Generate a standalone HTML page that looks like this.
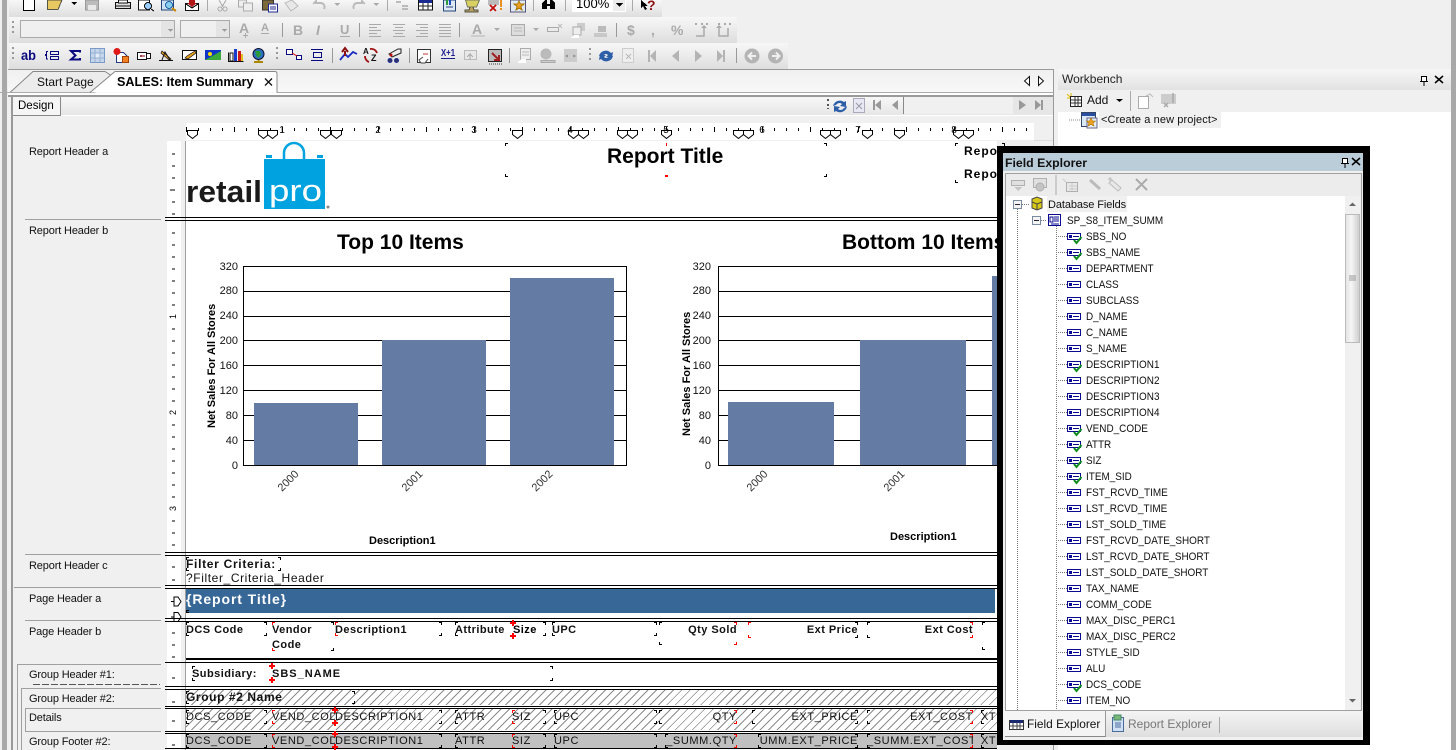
<!DOCTYPE html>
<html><head><meta charset="utf-8"><title>Report Designer</title>
<style>
html,body{margin:0;padding:0;width:1456px;height:750px;overflow:hidden;background:#f0f0f0}
body{position:relative;font:11px/14px "Liberation Sans",sans-serif;color:#000}
div,span,svg{position:absolute}
.t{white-space:nowrap}
.tb{background:linear-gradient(#f7f7f7,#dedede)}
.l{left:29px;white-space:nowrap;color:#111;letter-spacing:-.15px}
.hl{height:1px;background:#000;left:165px;width:832px}
.g{height:1px;background:#a0a0a0}
.b{--l:#000;--r:#000;white-space:nowrap;background:
linear-gradient(var(--l),var(--l)) 0 0/3px 1px no-repeat,linear-gradient(var(--l),var(--l)) 0 0/1px 3px no-repeat,
linear-gradient(var(--r),var(--r)) 100% 0/3px 1px no-repeat,linear-gradient(var(--r),var(--r)) 100% 0/1px 3px no-repeat,
linear-gradient(var(--l),var(--l)) 0 100%/3px 1px no-repeat,linear-gradient(var(--l),var(--l)) 0 100%/1px 3px no-repeat,
linear-gradient(var(--r),var(--r)) 100% 100%/3px 1px no-repeat,linear-gradient(var(--r),var(--r)) 100% 100%/1px 3px no-repeat;
letter-spacing:.6px;line-height:14px;color:#111}
.bo{font-weight:bold;letter-spacing:.45px;padding-top:1px;box-sizing:border-box}
.R{--l:#f00}.S{--r:#f00}
.ra{text-align:right}
.hatch{background:repeating-linear-gradient(-45deg,#fff 0 5px,#8c8c8c 5px 6px)}
.p{width:6px;height:6px;background:linear-gradient(#f00,#f00) 0 2px/6px 2px no-repeat,linear-gradient(#f00,#f00) 2px 0/2px 6px no-repeat}
svg text{font-family:"Liberation Sans",sans-serif}
</style></head>
<body>
<!-- outer chrome -->
<div style="left:0;top:0;width:1456px;height:70px;background:#f0f0f0"></div>
<div style="left:2px;top:0;width:5px;height:750px;background:#a8a8a8"></div>
<div style="left:1451px;top:0;width:5px;height:750px;background:#a8a8a8"></div>
<div class="tb" style="left:9px;top:0;width:653px;height:17px"></div>
<div class="tb" style="left:9px;top:17px;width:728px;height:26px"></div>
<div class="tb" style="left:9px;top:43px;width:779px;height:26px"></div>
<div style="left:8px;top:69px;width:1046px;height:1px;background:#999"></div>
<div style="left:20px;top:20px;width:155px;height:18px;border:1px solid #aaa;box-sizing:border-box;background:#f0f0f0"></div>
<div style="left:161px;top:21px;width:13px;height:16px;background:#e4e4e4"></div>
<div style="left:180px;top:20px;width:50px;height:18px;border:1px solid #aaa;box-sizing:border-box;background:#f0f0f0"></div>
<div style="left:216px;top:21px;width:13px;height:16px;background:#e4e4e4"></div>
<div style="left:572px;top:0;width:54px;height:12px;background:#fff"></div>
<div style="left:613px;top:0;width:12px;height:11px;background:#ececec"></div>
<div class="t" style="left:576px;top:-3px;font-size:13px;line-height:14px">100%</div>

<!-- toolbar icons -->
<svg style="left:0;top:0" width="1060" height="70" viewBox="0 0 1060 70">
<g stroke-width="1" shape-rendering="crispEdges">
<path d="M23.500 0V10.500H34.500V0" fill="#fff" stroke="#000"/>
<path d="M47.500 9.500V0H62L58 9.500Z" fill="#e8c860" stroke="#554"/>
<path d="M71 2h6l-3 3z" fill="#000"/>
<rect x="85.500" y="0" width="13" height="10" fill="#bbb" stroke="#999"/><rect x="88" y="5" width="8" height="5" fill="#e8e8e8"/>
<rect x="115.500" y="2.500" width="15" height="6" fill="#ddd" stroke="#111"/><rect x="118.500" y="0" width="9" height="3" fill="#fff" stroke="#111"/><path d="M116 6h14" stroke="#111"/>
<rect x="138.500" y="0" width="11" height="10" fill="#fff" stroke="#111"/><circle cx="148" cy="6" r="3.500" fill="#9cf" stroke="#111"/><path d="M151 9l3 2" stroke="#111"/>
<rect x="161.500" y="0" width="12" height="10" fill="#cfe2f5" stroke="#247"/><circle cx="169" cy="5" r="3.500" fill="#8ce" stroke="#26a"/><path d="M172 8l4 3" stroke="#c80" stroke-width="2"/>
<path d="M185.500 3.500h13v7h-13z" fill="#fff" stroke="#111"/><path d="M186 4l6 4 6-4" fill="none" stroke="#111"/><path d="M189 0h6v3h2l-5 4-5-4h2z" fill="#b01818"/>
<path d="M207.500 0v11" stroke="#aaa"/>
<path d="M219 0l4 7M226 0l-4 7" stroke="#aaa" fill="none"/><circle cx="220" cy="9" r="2" fill="none" stroke="#aaa"/><circle cx="225" cy="9" r="2" fill="none" stroke="#aaa"/>
<rect x="238.500" y="0" width="8" height="7" fill="#eee" stroke="#aaa"/><rect x="243.500" y="3" width="9" height="8" fill="#eee" stroke="#aaa"/>
<rect x="262.500" y="0" width="11" height="10" fill="#7d6a3a" stroke="#333"/><rect x="268.500" y="4" width="9" height="8" fill="#fff" stroke="#1a2a90"/><path d="M270 7h6M270 9h6" stroke="#1a2a90"/>
<path d="M285 3l7-3 6 6-7 5z" fill="#e8e8e8" stroke="#bbb"/>
<path d="M313 4l3-3v2h5a4 4 0 0 1 3 6" fill="none" stroke="#bbb" stroke-width="2"/><path d="M334 3h6l-3 3z" fill="#aaa"/>
<path d="M365 4l-3-3v2h-5a4 4 0 0 0-3 6" fill="none" stroke="#bbb" stroke-width="2"/><path d="M373 3h6l-3 3z" fill="#aaa"/>
<path d="M387.500 0v11" stroke="#aaa"/>
<path d="M396 1h5v2h-5zM402 5h6v2h-6zM402 8h6v2h-6z" fill="#bbb"/>
<rect x="418.500" y="0" width="14" height="10" fill="#fff" stroke="#111"/><rect x="419" y="0" width="13" height="3" fill="#1a2a90"/><path d="M419 6h13M423 3v7M428 3v7" stroke="#222"/>
<rect x="443.500" y="0" width="12" height="11" fill="#dfe9f5" stroke="#247"/><rect x="446" y="0" width="2" height="5" fill="#2a9a3a"/><rect x="449" y="0" width="2" height="5" fill="#1a50c0"/><path d="M446 7h7" stroke="#247"/>
<path d="M465.500 0h14l-3 7h-9z" fill="#d8d060" stroke="#776"/><path d="M470 7l-1 3h-4v2h13v-2h-4l-1-3" fill="#bca060" stroke="#554"/>
<rect x="488" y="0" width="11" height="5" fill="#bbb"/><path d="M490 5l6 6M496 5l-6 6" stroke="#c01010" stroke-width="2"/><rect x="500" y="0" width="2" height="7" fill="#e89020"/><rect x="500" y="8" width="2" height="2" fill="#e89020"/>
<rect x="510.500" y="0" width="15" height="12" fill="#dfe9f5" stroke="#557"/><path d="M519 1l1.500 3h3.500l-3 2.500 1 3.500-3-2-3 2 1-3.500-3-2.500h3.500z" fill="#f0a020" stroke="#a70"/>
<path d="M533.500 0v11M565.500 0v11M632.500 0v11" stroke="#aaa"/>
<path d="M542 9V3l3-3h2v4h3V0h2l3 3v6h-5V6h-3v3z" fill="#000"/>
<path d="M616 3h7l-3.500 4z" fill="#000"/>
<path d="M641 0v8l2-2 2 4 2-1-2-3h3z" fill="#000"/>
<path d="M13 21v2M13 26v2M13 31v2" stroke="#999" stroke-width="2"/>
<path d="M168 29h5l-2.500 3z" fill="#999"/><path d="M222 29h5l-2.500 3z" fill="#999"/>
</g>
<text x="647" y="10" font-size="14" font-weight="bold" fill="#8b1010">?</text>
<g fill="#aaa" font-weight="bold">
<text x="239" y="33" font-size="14">A</text><path d="M243 35h2v-2h1v2h2v1h-2v2h-1v-2h-2z"/>
<text x="261" y="31" font-size="11">A</text><path d="M261 33h8v1h-8z"/>
<text x="293" y="35" font-size="14">B</text>
<text x="316" y="35" font-size="14" font-style="italic" font-family="Liberation Serif,serif">I</text>
<text x="340" y="34" font-size="13">U</text><path d="M340 36h10v1h-10z"/>
<path d="M369 24h12v1h-12zM369 27h8v1h-8zM369 30h12v1h-12zM369 33h8v1h-8zM369 36h12v1h-12z"/>
<path d="M393 24h12v1h-12zM395 27h8v1h-8zM393 30h12v1h-12zM395 33h8v1h-8zM393 36h12v1h-12z"/>
<path d="M416 24h12v1h-12zM420 27h8v1h-8zM416 30h12v1h-12zM420 33h8v1h-8zM416 36h12v1h-12z"/>
<path d="M439 24h12v1h-12zM439 27h12v1h-12zM439 30h12v1h-12zM439 33h12v1h-12zM439 36h12v1h-12z"/>
<text x="472" y="34" font-size="14">A</text><path d="M471 35h14v2h-14z" fill="#ccc"/>
<path d="M494 28h6l-3 3zM533 28h6l-3 3z"/>
<rect x="511.500" y="24.500" width="13" height="11" fill="#ddd" stroke="#aaa"/><path d="M514 28h8M514 31h8" stroke="#bbb"/>
<path d="M547.500 27.500h11v4h-11z" fill="none" stroke="#aaa"/><path d="M558 24l4 4M562 24l-4 4" stroke="#bbb"/>
<rect x="577" y="23" width="8" height="8" fill="#ccc"/><rect x="573" y="27" width="8" height="8" fill="#eee" stroke="#aaa"/><path d="M571 38l3-3h5v3z" fill="#fff"/>
<rect x="598" y="26" width="8" height="6" fill="#bbb"/><path d="M594 34h13M594 36h13" stroke="#aaa"/>
<text x="627" y="35" font-size="14">$</text><text x="651" y="35" font-size="14">,</text><text x="671" y="35" font-size="14">%</text>
<path d="M696 36h8v-8" fill="none" stroke="#aaa" stroke-width="1.500"/><path d="M701 28h6l-3-3z"/><path d="M695 23h2v2h-2zM701 23h2v2h-2zM706 23h2v2h-2z"/>
<path d="M719 28v8h9v-8" fill="none" stroke="#aaa" stroke-width="1.500"/><path d="M716 28h6l-3-3z"/><path d="M718 23h2v2h-2zM724 23h2v2h-2zM729 23h2v2h-2z"/>
</g>
<path d="M282.500 23v14M359.500 23v14M459.500 23v14M616.500 23v14" stroke="#999" shape-rendering="crispEdges"/>
<path d="M13 47v2M13 52v2M13 57v2M277 47v2M277 52v2M277 57v2M590 48v2M590 53v2M590 58v2" stroke="#999" stroke-width="2" shape-rendering="crispEdges"/>
<path d="M332.500 48v15M409.500 48v15M509.500 48v15M736.500 48v15" stroke="#999" shape-rendering="crispEdges"/>
<text x="21" y="60" font-size="14" font-weight="bold" fill="#0a0a80" textLength="15" lengthAdjust="spacingAndGlyphs">ab</text>
<g fill="none" stroke="#0a0a80" shape-rendering="crispEdges">
<rect x="50.500" y="51.500" width="8" height="3"/><rect x="50.500" y="56.500" width="8" height="3"/><path d="M48 51.500h-1.500v3h-1v1h1v3.500h1.500"/>
</g>
<path d="M80 52.500v-1.500H71l4.500 4.500L71 59.500h9V58" fill="none" stroke="#0a0a80" stroke-width="2"/>
<g shape-rendering="crispEdges" fill="none">
<rect x="90.500" y="48.500" width="14" height="14" fill="#c6d6ea" stroke="#7a9ac8"/><rect x="95" y="53" width="6" height="5" fill="#e4ecf6"/><path d="M95 49v13M100 49v13M91 53h13M91 58h13" stroke="#94b0d4"/>
<path d="M116.500 52.500h7l4 4v6h-11z" fill="#fff" stroke="#223a80"/>
<rect x="122.500" y="56.500" width="6" height="6" fill="#f08020" stroke="#a04000"/>
<rect x="137.500" y="52.500" width="9" height="7" fill="#fff" stroke="#111"/><rect x="146.500" y="53.500" width="4" height="5" fill="#fff" stroke="#111"/><path d="M140 56h5M141 55v2" stroke="#800"/>
<path d="M159 60.500h14" stroke="#111"/>
<rect x="182.500" y="50.500" width="14" height="9" fill="#fff" stroke="#111"/>
<rect x="205" y="50" width="16" height="10" fill="#1033c8"/>
<path d="M228.500 52.500v9h15" stroke="#111"/><rect x="230" y="53" width="3" height="8" fill="#fff" stroke="#111"/><rect x="234" y="49" width="3" height="12" fill="#1a3ad0"/><rect x="238" y="51" width="3" height="10" fill="#d01a1a"/><rect x="241" y="54" width="2" height="7" fill="#e0c020"/>
<rect x="286.500" y="49.500" width="6" height="5" fill="#fff" stroke="#0a0a80"/><rect x="296.500" y="55.500" width="5" height="4" fill="#fff" stroke="#0a0a80"/>
<path d="M311 49.500h12M313.500 52.500h8v5h-8zM311 60.500h12" stroke="#0a0a80"/>
<rect x="417.500" y="49.500" width="13" height="13" fill="#fff" stroke="#333"/><path d="M423 54h5" stroke="#c33"/>
<rect x="464.500" y="50.500" width="12" height="9" fill="#e8e8e8" stroke="#bbb"/><path d="M470 60v-6l-3 3M470 54l3 3" stroke="#aaa"/>
<rect x="488.500" y="49.500" width="13" height="12" fill="#bbb" stroke="#222"/>
<rect x="520.500" y="48.500" width="10" height="11" fill="#eee" stroke="#aaa"/><path d="M522 52h7M522 55h7" stroke="#bbb"/><path d="M517 63l4-4h5v4z" fill="#fff"/>
<circle cx="546" cy="54" r="5.500" fill="#bbb"/><path d="M541 60.500h14v2h-14z" fill="#ccc" stroke="#aaa"/>
<rect x="564" y="49" width="13" height="13" fill="#ccc"/><path d="M568 55l-2 1 2 1M573 55l2 1-2 1" stroke="#888"/>
<rect x="622.500" y="48.500" width="11" height="14" fill="#eee" stroke="#ccc"/><path d="M626 54l5 5M631 54l-5 5" stroke="#bbb"/>
</g>
<circle cx="117" cy="51.500" r="3.500" fill="#e01818"/>
<path d="M162 51l9 8-2 1-8-7z" fill="#e8a020" stroke="#111" stroke-width=".7"/>
<path d="M162 60l3-8 5 8" fill="none" stroke="#111"/>
<path d="M185 58l2-2 8-5 1 2-8 6z" fill="#e8a020" stroke="#111" stroke-width=".7"/>
<path d="M205 60l16-9v9z" fill="#3aa83a"/><circle cx="210" cy="54" r="2" fill="#f8e000"/>
<circle cx="258.500" cy="54" r="5.500" fill="#2a70c0" stroke="#113"/><path d="M255 51h5l1 4-3 3-2-3z" fill="#2a9a3a"/><path d="M254 62h9M258.500 60v2" stroke="#a80" stroke-width="2"/>
<path d="M292 53l5 3" stroke="#d00"/>
<path d="M340 60l5-6 3 3 5-5 4 2" fill="none" stroke="#1a2ac0" stroke-width="1.800"/><path d="M345 56v-5M342 52l3-4 3 4" fill="none" stroke="#8b1010" stroke-width="2"/>
<text x="363" y="54" font-size="8" font-weight="bold" fill="#111">A</text><text x="371" y="61" font-size="9" font-weight="bold" fill="#111">Z</text>
<path d="M370 49a6 6 0 0 1 7 4M365 56a6 6 0 0 0 4 6" fill="none" stroke="#a01010" stroke-width="1.800"/>
<circle cx="390" cy="60.500" r="2" stroke="#1a2a90" fill="#336"/><circle cx="396.500" cy="60.500" r="2" stroke="#1a2a90" fill="#336"/><path d="M389 54l9-5h3v4l-9 4z" stroke="#222" fill="#eee"/><circle cx="391" cy="55" r="1.500" fill="#c01010"/>
<path d="M423 57l-4 3 2 3h4l3-4" fill="#fff" stroke="#444"/>
<text x="441" y="56" font-size="10" font-weight="bold" fill="#1a1a90" textLength="14" lengthAdjust="spacingAndGlyphs">X+1</text>
<path d="M441 58h14v1h-14z" fill="#1a1a90"/>
<path d="M492 53l7 7M499 55v5h-5" fill="none" stroke="#a02020" stroke-width="2"/>
<path d="M489 64h13" stroke="#333" stroke-dasharray="1 1"/>
<path d="M599 56a7 7 0 0 1 12-3l2-1-1 6-6-1 2-2a4 4 0 0 0-6 1zM613 56a7 7 0 0 1-12 3l-2 1 1-6 6 1-2 2a4 4 0 0 0 6-1z" fill="#2c5fa8"/>
<g fill="#b4b4b4">
<path d="M648 50h2v12h-2zM656 50v12l-6-6zM679 50v12l-7-6zM695 50l7 6-7 6zM717 50l6 6-6 6zM723 50h2v12h-2z"/>
<circle cx="752" cy="56" r="7.500"/><circle cx="775.500" cy="56" r="7.500"/>
</g>
<path d="M756 56h-7m3-3.500l-3.500 3.500 3.500 3.500M772 56h7m-3-3.500l3.500 3.500-3.500 3.500" stroke="#f0f0f0" stroke-width="2" fill="none"/>
</svg>

<!-- tabs -->
<div style="left:8px;top:70px;width:1045px;height:22px;background:linear-gradient(#f0f0f0,#f8f8f8)"></div>
<div style="left:8px;top:93px;width:1045px;height:2px;background:#fff"></div>
<div style="left:277px;top:92px;width:776px;height:1px;background:#aaa"></div>
<svg style="left:0;top:68px" width="300" height="30" viewBox="0 0 300 30">
<path d="M10 24.500L33 3.500H105L112 8 95 24.500Z" fill="#ececec" stroke="#888"/>
<path d="M90 24.500L115 3.500H275Q277 3.500 277 6V24.500" fill="#fff" stroke="#888"/>
<path d="M0 24.500H10M10 24.500H90" stroke="#aaa"/>
<path d="M265 10.500l7 7M272 10.500l-7 7" stroke="#111" stroke-width="1.300"/>
</svg>
<div class="t" style="left:37px;top:75px;font-size:12px;color:#111">Start Page</div>
<div class="t" style="left:117px;top:75px;font-size:12.600px;font-weight:bold">SALES: Item Summary</div>
<svg style="left:1020px;top:74px" width="30" height="14"><path d="M9.500 2.500v9l-5-4.500zM18.500 2.500v9l5-4.500z" fill="#fff" stroke="#111"/></svg>
<div style="left:8px;top:95px;width:1045px;height:2px;background:#999"></div>
<div style="left:1053px;top:69px;width:1px;height:681px;background:#999"></div>
<div style="left:11px;top:96px;width:2px;height:654px;background:#999"></div>
<div style="left:13px;top:97px;width:1040px;height:18px;background:linear-gradient(#f7f7f7,#e6e6e6)"></div>
<div style="left:13px;top:115px;width:1040px;height:1px;background:#fff"></div>
<div class="t" style="left:13px;top:97px;width:47px;height:18px;background:#f5f5f5;border-right:1px solid #888;border-bottom:1px solid #888;font-size:11.500px;line-height:18px;text-indent:5px">Design</div>
<div style="left:903px;top:97px;width:110px;height:17px;background:#f0f0f0;border-left:1px solid #888"></div>
<div style="left:1013px;top:97px;width:40px;height:17px;background:#e6e6e6"></div>
<svg style="left:825px;top:96px" width="230" height="20" viewBox="825 96 230 20">
<path d="M828 99v2M828 104v2M828 108v1" stroke="#555" stroke-width="2"/>
<path d="M833 106a7 7 0 0 1 11-4l2-1v6l-6-1 2-2a4 4 0 0 0-6 1zM847 106a7 7 0 0 1-11 5l-2 1v-6l6 1-2 2a4 4 0 0 0 6-1z" fill="#2c5fa8"/>
<rect x="853.500" y="98.500" width="11" height="14" fill="#e8e8f4" stroke="#aab"/><path d="M856 103l6 6M862 103l-6 6" stroke="#99a"/>
<g fill="#999"><path d="M873 100h2v10h-2zM881 100v10l-6-5zM898 100v10l-6-5zM1019 100l7 5-7 5zM1035 100l6 5-6 5zM1041 100h2v10h-2z"/></g>
</svg>

<!-- design area -->
<div style="left:13px;top:116px;width:1040px;height:634px;background:#f0f0f0"></div>
<div style="left:186px;top:123px;width:848px;height:17px;background:#fff"></div>
<div style="left:1034px;top:140px;width:19px;height:1px;background:#ddd"></div>
<div style="left:167px;top:141px;width:14px;height:609px;background:#fff"></div>
<div style="left:186px;top:141px;width:811px;height:609px;background:#fff"></div>
<div style="left:185px;top:141px;width:1px;height:609px;background:#a0a0a0"></div>

<svg style="left:186px;top:123px" width="848" height="17" viewBox="186 123 848 17" shape-rendering="crispEdges">
<defs><pattern id="tk" x="186" y="123" width="12" height="17" patternUnits="userSpaceOnUse"><rect x="0" y="5" width="1" height="3" fill="#000"/></pattern>
<pattern id="tk2" x="186" y="123" width="48" height="17" patternUnits="userSpaceOnUse"><rect x="0" y="4" width="1" height="5" fill="#000"/></pattern>
<symbol id="mk" overflow="visible"><path d="M-5 0h10v4l-5 4-5-4z" fill="#fff" stroke="#000" transform="translate(.5 .5)"/></symbol></defs>
<rect x="186" y="123" width="848" height="17" fill="url(#tk)"/><rect x="186" y="123" width="848" height="17" fill="url(#tk2)"/>
<rect x="186" y="123" width="848" height="3" fill="#fff"/>
<g shape-rendering="auto">
<use href="#mk" x="192" y="130"/><use href="#mk" x="263" y="130"/><use href="#mk" x="272" y="130"/><use href="#mk" x="325" y="130"/><use href="#mk" x="336" y="130"/><use href="#mk" x="517" y="130"/><use href="#mk" x="573" y="130"/><use href="#mk" x="583" y="130"/><use href="#mk" x="622" y="130"/><use href="#mk" x="632" y="130"/><use href="#mk" x="666" y="130"/><use href="#mk" x="738" y="130"/><use href="#mk" x="748" y="130"/><use href="#mk" x="825" y="130"/><use href="#mk" x="835" y="130"/><use href="#mk" x="867" y="130"/><use href="#mk" x="899" y="130"/><use href="#mk" x="958" y="130"/><use href="#mk" x="968" y="130"/>
<g font-size="10" text-anchor="middle" fill="#000"><text x="282" y="133">1</text><text x="378" y="133">2</text><text x="474" y="133">3</text><text x="570" y="133">4</text><text x="666" y="133">5</text><text x="762" y="133">6</text><text x="858" y="133">7</text><text x="954" y="133">8</text></g>
</g>
</svg>

<!-- vertical ruler -->
<svg style="left:167px;top:141px" width="19" height="609" viewBox="167 141 19 609" shape-rendering="crispEdges">
<path d="M172 154h3M172 166h3M172 178h3M170 190h5M172 202h3M172 214h3M172 233h3M172 245h3M172 257h3M172 269h3M172 281h3M172 293h3M172 305h3M172 329h3M172 341h3M172 353h3M172 365h3M172 377h3M172 389h3M172 401h3M172 425h3M172 437h3M172 449h3M172 461h3M172 473h3M172 485h3M172 497h3M172 521h3M172 533h3M172 545h3M172 567h3M172 580h3M172 633h3M172 645h3M172 657h3M172 678h3M172 702h3M172 721h3M172 745h3" stroke="#000"/>
<g shape-rendering="auto" font-size="9" fill="#000"><text transform="translate(176 319) rotate(-90)">1</text><text transform="translate(176 415) rotate(-90)">2</text><text transform="translate(176 511) rotate(-90)">3</text></g>
<path d="M181 601.500l-3-4.500h-4v9h4zM174 601.500h-3M181 617l-3-4.500h-4v9h4zM174 617h-3" fill="#fff" stroke="#000" shape-rendering="auto"/>
</svg>

<!-- section labels -->
<div class="l" style="top:145px">Report Header a</div>
<div class="l" style="top:224px">Report Header b</div>
<div class="l" style="top:559px">Report Header c</div>
<div class="l" style="top:592px">Page Header a</div>
<div class="l" style="top:625px">Page Header b</div>
<div class="l" style="top:668px">Group Header #1:</div>
<div class="l" style="top:692px">Group Header #2:</div>
<div class="l" style="top:711px">Details</div>
<div class="l" style="top:735px">Group Footer #2:</div>
<div style="left:33px;top:684px;width:127px;height:1px;background:repeating-linear-gradient(90deg,#555 0 7px,#f0f0f0 7px 9px)"></div>
<div class="g" style="left:25px;top:219px;width:136px"></div>
<div class="g" style="left:25px;top:554px;width:136px"></div>
<div class="g" style="left:14px;top:587px;width:147px"></div>
<div class="g" style="left:25px;top:620px;width:136px"></div>
<div class="g" style="left:17px;top:664px;width:144px"></div>
<div class="g" style="left:21px;top:688px;width:140px"></div>
<div class="g" style="left:25px;top:708px;width:136px"></div>
<div class="g" style="left:25px;top:731px;width:136px"></div>
<div style="left:17px;top:664px;width:1px;height:86px;background:#a0a0a0"></div>
<div style="left:21px;top:688px;width:1px;height:62px;background:#a0a0a0"></div>
<div style="left:25px;top:708px;width:1px;height:23px;background:#a0a0a0"></div>

<!-- bands -->
<div style="left:186px;top:589px;width:809px;height:24px;background:#366797"></div>
<div class="hatch" style="left:186px;top:690px;width:811px;height:15px"></div>
<div class="hatch" style="left:186px;top:709px;width:811px;height:21px"></div>
<div style="left:186px;top:733px;width:811px;height:15px;background:#c0c0c0"></div>

<!-- section rules -->
<div class="hl" style="top:217px"></div><div class="hl" style="top:220px"></div>
<div class="hl" style="top:552px"></div><div class="hl" style="top:555px"></div>
<div class="hl" style="top:585px"></div><div class="hl" style="top:588px"></div>
<div class="hl" style="top:618px"></div><div class="hl" style="top:621px"></div>
<div class="hl" style="top:658px;left:186px;width:811px;height:2px"></div><div class="hl" style="top:662px"></div>
<div class="hl" style="top:686px"></div><div class="hl" style="top:689px"></div>
<div class="hl" style="top:706px"></div><div class="hl" style="top:708px"></div>
<div class="hl" style="top:731px"></div><div class="hl" style="top:733px"></div>
<div class="hl" style="top:748px"></div>

<!-- logo -->
<svg style="left:186px;top:141px" width="150" height="76" viewBox="186 141 150 76">
<path d="M284 160v-7a10 10 0 0 1 20 0v7" fill="none" stroke="#00a3e0" stroke-width="2.500"/>
<rect x="264" y="159" width="61" height="50" fill="#00a3e0"/>
<rect x="266" y="155" width="6" height="3" fill="#00a3e0"/><rect x="317" y="155" width="6" height="3" fill="#00a3e0"/>
<text x="186" y="202" font-size="31" font-weight="bold" fill="#1a1a1a" textLength="76" lengthAdjust="spacingAndGlyphs">retail</text>
<text x="269" y="201" font-size="31" fill="#fff" textLength="53" lengthAdjust="spacingAndGlyphs">pro</text>
<circle cx="328" cy="207" r="1.500" fill="#888"/>
</svg>

<!-- report header text -->
<div class="b" style="left:505px;top:143px;width:322px;height:34px;letter-spacing:0"></div>
<div class="t" style="left:607px;top:145px;font-size:21px;font-weight:bold;line-height:24px">Report Title</div>
<div class="b" style="left:955px;top:143px;width:50px;height:40px;letter-spacing:0"></div>
<div class="t bo" style="left:964px;top:143px;letter-spacing:1px;font-size:12px">Repo</div>
<div class="t bo" style="left:964px;top:166px;letter-spacing:1px;font-size:12px">Repo</div>
<div style="left:666px;top:143px;width:1px;height:3px;background:#f00"></div>
<div style="left:665px;top:175px;width:3px;height:2px;background:#f00"></div>

<!-- charts -->
<svg style="left:186px;top:222px" width="811" height="330" viewBox="186 222 811 330">
<g stroke="#000" stroke-width="1" shape-rendering="crispEdges">
<rect x="243.500" y="266.500" width="383" height="199" fill="#fff"/>
<path d="M243 291.500h383M243 316.500h383M243 340.500h383M243 365.500h383M243 390.500h383M243 415.500h383M243 440.500h383"/>
<rect x="718.500" y="266.500" width="300" height="199" fill="#fff"/>
<path d="M718 291.500h279M718 316.500h279M718 340.500h279M718 365.500h279M718 390.500h279M718 415.500h279M718 440.500h279"/>
</g>
<g fill="#647ba3" shape-rendering="crispEdges">
<rect x="254" y="403" width="104" height="62"/><rect x="382" y="340" width="104" height="125"/><rect x="510" y="278" width="104" height="187"/>
<rect x="728" y="402" width="106" height="63"/><rect x="860" y="340" width="106" height="125"/><rect x="992" y="276" width="5" height="189"/>
</g>
<text x="337" y="249" font-size="21" font-weight="bold">Top 10 Items</text>
<text x="842" y="249" font-size="21" font-weight="bold">Bottom 10 Items</text>
<g font-size="11" text-anchor="end" fill="#111">
<text x="238" y="270">320</text><text x="238" y="294">280</text><text x="238" y="319">240</text><text x="238" y="344">200</text><text x="238" y="369">160</text><text x="238" y="394">120</text><text x="238" y="419">80</text><text x="238" y="444">40</text><text x="238" y="469">0</text>
<text x="711" y="270">320</text><text x="711" y="294">280</text><text x="711" y="319">240</text><text x="711" y="344">200</text><text x="711" y="369">160</text><text x="711" y="394">120</text><text x="711" y="419">80</text><text x="711" y="444">40</text><text x="711" y="469">0</text>
</g>
<g font-size="11" fill="#333">
<text transform="translate(282 492) rotate(-45)">2000</text><text transform="translate(406 492) rotate(-45)">2001</text><text transform="translate(536 492) rotate(-45)">2002</text>
<text transform="translate(751 492) rotate(-45)">2000</text><text transform="translate(888 492) rotate(-45)">2001</text>
</g>
<g font-size="11" font-weight="bold">
<text transform="translate(215 428) rotate(-90)">Net Sales For All Stores</text>
<text transform="translate(690 436) rotate(-90)">Net Sales For All Stores</text>
<text x="369" y="544">Description1</text><text x="890" y="540">Description1</text>
</g>
</svg>

<!-- filter -->
<div class="b" style="left:186px;top:557px;width:95px;height:14px;font-weight:bold;letter-spacing:.7px;font-size:12px">Filter Criteria:</div>
<div class="t" style="left:186px;top:571px;font-size:12px;letter-spacing:.6px;color:#111">?Filter_Criteria_Header</div>
<div class="t" style="left:186px;top:591px;font-size:14px;font-weight:bold;line-height:17px;letter-spacing:.9px;color:#fff">{Report Title}</div>
<div class="b" style="left:186px;top:610px;width:809px;height:3px;--r:#366797"></div>

<!-- page header b -->
<div class="b bo" style="left:186px;top:622px;width:81px;height:14px">DCS Code</div>
<div class="b bo R" style="left:272px;top:622px;width:62px;height:29px;line-height:15px">Vendor<br>Code</div>
<div class="b bo R" style="left:335px;top:622px;width:107px;height:14px">Description1</div>
<div class="b bo" style="left:455px;top:622px;width:91px;height:14px">Attribute</div>
<div class="t bo" style="left:513px;top:622px">Size</div>
<div class="p" style="left:510px;top:620px"></div><div class="p" style="left:510px;top:633px"></div>
<div class="b bo" style="left:552px;top:622px;width:105px;height:14px">UPC</div>
<div class="b bo ra S" style="left:659px;top:622px;width:78px;height:23px">Qty Sold</div>
<div class="b bo ra R" style="left:748px;top:622px;width:110px;height:16px">Ext Price</div>
<div class="b bo ra S" style="left:867px;top:622px;width:106px;height:16px">Ext Cost</div>
<div class="b" style="left:982px;top:622px;width:15px;height:28px;--r:transparent"></div>

<!-- group headers -->
<div class="b bo" style="left:192px;top:666px;width:79px;height:15px;--r:transparent">Subsidiary:</div>
<div class="b bo R" style="left:272px;top:666px;width:281px;height:15px;--r:#000;letter-spacing:1px">SBS_NAME</div>
<div class="p" style="left:269px;top:663px"></div><div class="p" style="left:269px;top:677px"></div>
<div class="b bo" style="left:186px;top:691px;width:169px;height:13px;font-size:12px;line-height:12px;padding-top:0;letter-spacing:.6px">Group #2 Name</div>

<!-- details -->
<div class="b" style="left:186px;top:710px;width:81px;height:14px">DCS_CODE</div>
<div class="b R" style="left:272px;top:710px;width:63px;height:14px;overflow:hidden">VEND_COD</div>
<div class="b" style="left:335px;top:710px;width:107px;height:14px">DESCRIPTION1</div>
<div class="b" style="left:455px;top:710px;width:91px;height:14px">ATTR</div>
<div class="b R" style="left:512px;top:710px;width:34px;height:14px">SIZ</div>
<div class="b" style="left:554px;top:710px;width:103px;height:14px">UPC</div>
<div class="b ra S" style="left:659px;top:710px;width:78px;height:14px">QTY</div>
<div class="b ra" style="left:752px;top:710px;width:106px;height:14px">EXT_PRICE</div>
<div class="b ra S" style="left:867px;top:710px;width:106px;height:14px">EXT_COST</div>
<div class="b" style="left:981px;top:710px;width:16px;height:14px;--r:transparent">XT</div>

<!-- footer -->
<div class="b" style="left:186px;top:734px;width:81px;height:14px">DCS_CODE</div>
<div class="b R" style="left:272px;top:734px;width:63px;height:14px;overflow:hidden">VEND_COD</div>
<div class="b" style="left:335px;top:734px;width:107px;height:14px">DESCRIPTION1</div>
<div class="b" style="left:455px;top:734px;width:91px;height:14px">ATTR</div>
<div class="b R" style="left:512px;top:734px;width:34px;height:14px">SIZ</div>
<div class="b" style="left:554px;top:734px;width:103px;height:14px">UPC</div>
<div class="b ra S" style="left:665px;top:734px;width:72px;height:14px">_SUMM.QTY</div>
<div class="b ra" style="left:758px;top:734px;width:100px;height:14px;overflow:hidden">UMM.EXT_PRICE</div>
<div class="b ra S" style="left:867px;top:734px;width:106px;height:14px;overflow:hidden">_SUMM.EXT_COST</div>
<div class="b" style="left:981px;top:734px;width:16px;height:14px;--r:transparent">XT</div>
<div class="p" style="left:332px;top:707px"></div><div class="p" style="left:332px;top:720px"></div>
<div class="p" style="left:332px;top:731px"></div><div class="p" style="left:332px;top:744px"></div>

<!-- workbench -->
<div style="left:1054px;top:69px;width:397px;height:681px;background:#fff"></div>
<div style="left:1054px;top:69px;width:4px;height:681px;background:#f0f0f0"></div>
<div style="left:1058px;top:69px;width:393px;height:21px;background:linear-gradient(#f7f7f7,#e2e2e2)"></div>
<div style="left:1058px;top:90px;width:393px;height:22px;background:#f0f0f0"></div>
<div class="t" style="left:1062px;top:72px;font-size:12px;color:#222">Workbench</div>
<svg style="left:1060px;top:70px" width="390" height="60" viewBox="1060 70 390 60">
<path d="M1421.500 76.500h5v5h-5zM1420 81.500h8M1424 82v4" fill="#fff" stroke="#000" shape-rendering="crispEdges"/>
<path d="M1435 76l8 7M1443 76l-8 7" stroke="#000" stroke-width="1.500"/>
<rect x="1070.500" y="96.500" width="11" height="10" fill="#fff" stroke="#222" shape-rendering="crispEdges"/><path d="M1071 100h10M1071 103h10M1075 97v9M1078 97v9" stroke="#333" shape-rendering="crispEdges"/><path d="M1067 94l3 3M1071 93v3M1067 98h3" stroke="#db0"/>
<path d="M1116 99h7l-3.500 3z" fill="#000"/>
<path d="M1130.500 91v20" stroke="#aaa" shape-rendering="crispEdges"/>
<path d="M1139.500 96.500h9v12h-10v-12z" fill="#fff" stroke="#aaa"/><path d="M1146 96l4-2 3 3" fill="none" stroke="#bbb"/>
<rect x="1161" y="94" width="15" height="10" fill="#ccc"/><path d="M1164 103l4 4M1168 103l-4 4M1173 93v10" stroke="#aaa" stroke-width="1.500"/>
<path d="M1069 120h12" stroke="#888" stroke-dasharray="1 1" shape-rendering="crispEdges"/>
<rect x="1081.500" y="112.500" width="14" height="14" fill="#dbe8f5" stroke="#346"/><rect x="1082" y="113" width="13" height="3" fill="#2a4ea0"/><rect x="1087" y="118" width="10" height="10" fill="#e8eef8" stroke="#668"/>
<path d="M1091 118l1.500 3h3l-2.500 2 1 3-3-1.500-3 1.500 1-3-2.500-2h3z" fill="#f0a020" stroke="#a70" stroke-width=".6"/>
</svg>
<div class="t" style="left:1087px;top:93px;font-size:12px;color:#111">Add</div>
<div class="t" style="left:1099px;top:112px;width:122px;height:16px;background:#f0f0f0;line-height:17px;text-indent:2px;color:#111;letter-spacing:.1px">&lt;Create a new project&gt;</div>

<!-- Field Explorer -->
<div style="left:997px;top:146px;width:373px;height:599px;background:#000"></div>
<div style="left:1003px;top:153px;width:360px;height:587px;background:#f0f0f0"></div>
<div style="left:1003px;top:153px;width:360px;height:18px;background:#bccdda"></div>
<div class="t" style="left:1005px;top:156px;font-size:12.300px;font-weight:bold;color:#111">Field Explorer</div>
<div style="left:1005px;top:173px;width:357px;height:1px;background:#a0a0a0"></div>
<div style="left:1005px;top:174px;width:357px;height:22px;background:#ececec"></div>
<div style="left:1005px;top:196px;width:355px;height:514px;background:#fff"></div>
<div style="left:1005px;top:173px;width:1px;height:538px;background:#a0a0a0"></div>
<div style="left:1361px;top:173px;width:1px;height:538px;background:#a0a0a0"></div>
<div style="left:1345px;top:196px;width:15px;height:514px;background:#f0f0f0"></div>
<div style="left:1345px;top:214px;width:15px;height:129px;background:linear-gradient(90deg,#e4e4e4,#f6f6f6 40%,#cfcfcf);box-sizing:border-box;border:1px solid #bbb"></div>

<svg style="left:997px;top:146px" width="373" height="599" viewBox="997 146 373 599">
<defs>
<symbol id="fd" overflow="visible"><path d="M1056 0h11" stroke="#777" stroke-dasharray="1 1" transform="translate(0 .5)" shape-rendering="crispEdges"/><rect x="1067.500" y="-2.500" width="13" height="6" fill="#fff" stroke="#0a0a90" shape-rendering="crispEdges"/><rect x="1069" y="-1" width="3" height="3" fill="#0a0a90"/><path d="M1073 0.500h6" stroke="#0a0a90"/></symbol>
<symbol id="ck" overflow="visible"><path d="M1074 4l2.500 3 5-6" fill="none" stroke="#0a8a1a" stroke-width="2"/></symbol>
</defs>
<path d="M1342.500 158.500h5v5h-5zM1341 163.500h8M1345 164v4" fill="#fff" stroke="#000" shape-rendering="crispEdges"/>
<path d="M1352 158l8 7M1360 158l-8 7" stroke="#000" stroke-width="1.500"/>
<g fill="#c4c4c4" stroke="#b0b0b0" shape-rendering="crispEdges">
<rect x="1011.500" y="180.500" width="13" height="5" fill="#e0e0e0"/><path d="M1014 187h8l-4 4z" stroke="none"/>
<rect x="1033.500" y="178.500" width="13" height="9" fill="#e0e0e0"/><circle cx="1040" cy="187" r="4" shape-rendering="auto"/>
<rect x="1066.500" y="182.500" width="11" height="9" fill="#e8e8e8"/><path d="M1069 186h8M1069 189h8M1072 183v8" stroke="#ccc"/><path d="M1063 179l3 3" stroke="#ccc"/>
</g>
<path d="M1056 175v20" stroke="#aaa" shape-rendering="crispEdges"/>
<path d="M1090 180l10 9" stroke="#bbb" stroke-width="3"/>
<path d="M1112 180l9 8-3 3-9-8zM1110 177v4M1108 179h4" fill="#e8e8e8" stroke="#bbb"/>
<path d="M1136 179l11 11M1147 179l-11 11" stroke="#aaa" stroke-width="2"/>
<path d="M1017.500 209v501M1056.500 226v484" stroke="#777" stroke-dasharray="1 1" shape-rendering="crispEdges"/>
<path d="M1036.500 224v-6" stroke="#777" stroke-dasharray="1 1"/>
<path d="M1022 204.500h8M1041 220.500h6" stroke="#777" stroke-dasharray="1 1" shape-rendering="crispEdges"/>
<g shape-rendering="crispEdges"><rect x="1013.500" y="200.500" width="8" height="8" fill="#f4f4f4" stroke="#7a8aa0"/><path d="M1015 204.500h5" stroke="#223"/>
<rect x="1032.500" y="216.500" width="8" height="8" fill="#f4f4f4" stroke="#7a8aa0"/><path d="M1034 220.500h5" stroke="#223"/>
<rect x="1048.500" y="214.500" width="12" height="11" fill="#fff" stroke="#0a0a90"/><path d="M1050 217h3v5h-3zM1054 217h5M1054 219h5M1054 221h5M1051 224h8" stroke="#0a0a90" fill="none"/></g>
<path d="M1032 199l5-2 5 2v9l-5 2-5-2z" fill="#d8c818" stroke="#444"/><path d="M1032 202l5 2 5-2M1037 204v6" fill="none" stroke="#444"/>
<g font-size="11" fill="#111">
<rect x="1047" y="196" width="80" height="16" fill="#f0f0f0"/>
<text x="1048" y="208" letter-spacing="-.1">Database Fields</text>
<text x="1067" y="224" transform="translate(1067 0) scale(.905 1) translate(-1067 0)">SP_S8_ITEM_SUMM</text>
<g transform="translate(1086 0) scale(.905 1) translate(-1086 0)">
<text x="1086" y="240">SBS_NO</text><text x="1086" y="256">SBS_NAME</text><text x="1086" y="272">DEPARTMENT</text><text x="1086" y="288">CLASS</text><text x="1086" y="304">SUBCLASS</text><text x="1086" y="320">D_NAME</text><text x="1086" y="336">C_NAME</text><text x="1086" y="352">S_NAME</text><text x="1086" y="368">DESCRIPTION1</text><text x="1086" y="384">DESCRIPTION2</text><text x="1086" y="400">DESCRIPTION3</text><text x="1086" y="416">DESCRIPTION4</text><text x="1086" y="432">VEND_CODE</text><text x="1086" y="448">ATTR</text><text x="1086" y="464">SIZ</text><text x="1086" y="480">ITEM_SID</text><text x="1086" y="496">FST_RCVD_TIME</text><text x="1086" y="512">LST_RCVD_TIME</text><text x="1086" y="528">LST_SOLD_TIME</text><text x="1086" y="544">FST_RCVD_DATE_SHORT</text><text x="1086" y="560">LST_RCVD_DATE_SHORT</text><text x="1086" y="576">LST_SOLD_DATE_SHORT</text><text x="1086" y="592">TAX_NAME</text><text x="1086" y="608">COMM_CODE</text><text x="1086" y="624">MAX_DISC_PERC1</text><text x="1086" y="640">MAX_DISC_PERC2</text><text x="1086" y="656">STYLE_SID</text><text x="1086" y="672">ALU</text><text x="1086" y="688">DCS_CODE</text><text x="1086" y="704">ITEM_NO</text>
</g>
</g>
<use href="#fd" y="236"/><use href="#fd" y="252"/><use href="#fd" y="268"/><use href="#fd" y="284"/><use href="#fd" y="300"/><use href="#fd" y="316"/><use href="#fd" y="332"/><use href="#fd" y="348"/><use href="#fd" y="364"/><use href="#fd" y="380"/><use href="#fd" y="396"/><use href="#fd" y="412"/><use href="#fd" y="428"/><use href="#fd" y="444"/><use href="#fd" y="460"/><use href="#fd" y="476"/><use href="#fd" y="492"/><use href="#fd" y="508"/><use href="#fd" y="524"/><use href="#fd" y="540"/><use href="#fd" y="556"/><use href="#fd" y="572"/><use href="#fd" y="588"/><use href="#fd" y="604"/><use href="#fd" y="620"/><use href="#fd" y="636"/><use href="#fd" y="652"/><use href="#fd" y="668"/><use href="#fd" y="684"/><use href="#fd" y="700"/>
<use href="#ck" y="236"/><use href="#ck" y="252"/><use href="#ck" y="364"/><use href="#ck" y="428"/><use href="#ck" y="444"/><use href="#ck" y="460"/><use href="#ck" y="476"/><use href="#ck" y="684"/>
<path d="M1349 206h7l-3.500-3.500zM1349 699h7l-3.500 3.500z" fill="#666"/>
<path d="M1349 276h7M1349 278h7M1349 280h7" stroke="#999" shape-rendering="crispEdges"/>
</svg>

<!-- bottom tabs -->
<div style="left:1005px;top:711px;width:357px;height:26px;background:linear-gradient(#f4f4f4,#dedede)"></div>
<div style="left:1005px;top:710px;width:357px;height:1px;background:#a0a0a0"></div>
<div class="t" style="left:1005px;top:711px;width:100px;height:25px;background:#f4f4f4;border-right:1px solid #999;border-bottom:1px solid #888;line-height:26px;font-size:11.900px;text-indent:22px;color:#111">Field Explorer</div>
<div class="t" style="left:1128px;top:711px;line-height:26px;font-size:12px;color:#777">Report Explorer</div>
<div style="left:1219px;top:717px;width:1px;height:16px;background:#aaa"></div>
<svg style="left:1005px;top:711px" width="130" height="26" viewBox="1005 711 130 26" shape-rendering="crispEdges">
<rect x="1009.500" y="720.500" width="14" height="9" fill="#fff" stroke="#333"/><rect x="1010" y="720" width="13" height="3" fill="#1a2a70"/><path d="M1010 726h13M1013 723v7M1017 723v7M1020 723v7" stroke="#444"/>
<rect x="1112.500" y="717.500" width="11" height="14" fill="#cfe0f5" stroke="#4a6a9a"/><rect x="1114" y="715" width="7" height="5" fill="#7ab87a" stroke="#486"/><path d="M1115 723h6M1115 725h6M1115 727h6" stroke="#4a6a9a"/>
</svg>
</body></html>
